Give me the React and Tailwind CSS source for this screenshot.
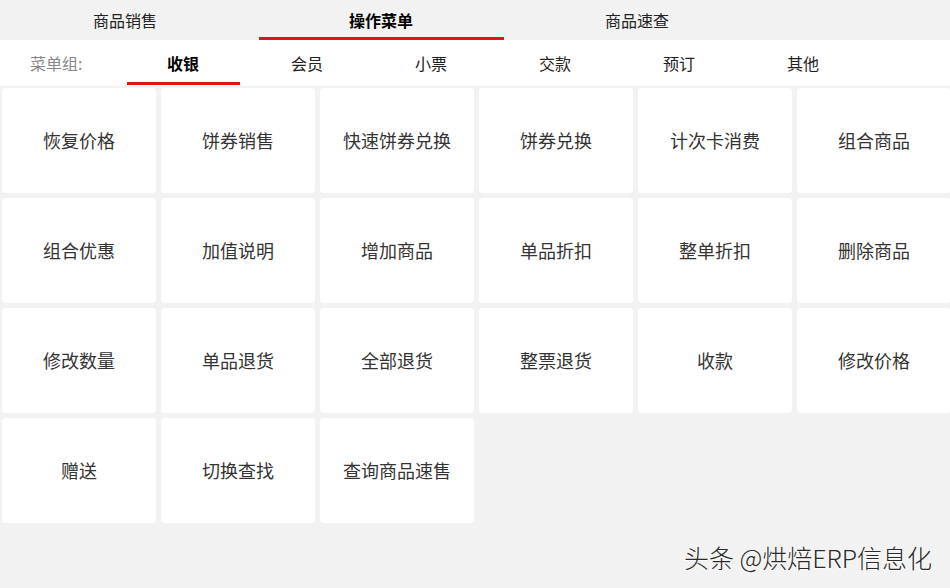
const topTabs = ['商品销售', '操作菜单', '商品速查'];
const groups = ['收银', '会员', '小票', '交款', '预订', '其他'];
const actions = [
  '恢复价格', '饼券销售', '快速饼券兑换', '饼券兑换', '计次卡消费', '组合商品',
  '组合优惠', '加值说明', '增加商品', '单品折扣', '整单折扣', '删除商品',
  '修改数量', '单品退货', '全部退货', '整票退货', '收款', '修改价格',
  '赠送', '切换查找', '查询商品速售',
];

const App = () => {
  return (
    <div className="relative min-h-screen bg-[#f2f2f2] text-[#222] font-['Noto_Sans_CJK_SC','Noto_Sans',sans-serif]">
      {/* Top tabs */}
      <div className="flex h-[40px] bg-[#f2f2f2] ml-[-3px]">
        {topTabs.map((tab, i) => (
          <div key={tab} className="relative w-[256px] flex items-center justify-center text-[16px]">
            <span className={i === 1 ? 'font-bold text-black' : 'text-[#222]'}>{tab}</span>
            {i === 1 && <div className="absolute bottom-0 left-[6px] right-[5px] h-[3px] bg-[#e0141c]" />}
          </div>
        ))}
      </div>

      {/* Menu groups */}
      <div className="flex h-[46px] bg-white items-stretch">
        <div className="w-[121px] flex items-center pl-[30px] text-[16px] text-[#888]">菜单组:</div>
        {groups.map((g, i) => (
          <div key={g} className="relative w-[124px] flex items-center justify-center text-[16px]">
            <span className={i === 0 ? 'font-bold text-black' : 'text-[#222]'}>{g}</span>
            {i === 0 && <div className="absolute bottom-[1px] left-[6px] right-[5px] h-[3px] bg-[#e0141c]" />}
          </div>
        ))}
      </div>

      {/* Action grid */}
      <div className="grid grid-cols-[repeat(6,154px)] gap-[5px] pl-[2px] pt-[2px]">
        {actions.map((a) => (
          <div
            key={a}
            className="h-[105px] bg-white rounded-[4px] flex items-center justify-center text-[18px] text-[#333]"
          >
            {a}
          </div>
        ))}
      </div>

      {/* Watermark */}
      <div className="absolute right-[18px] top-[539px] text-[25px] font-light text-[#2a2a2a] [text-shadow:-1px_1px_0_#fff]">
        头条 @烘焙ERP信息化
      </div>
    </div>
  );
};

export default App;
